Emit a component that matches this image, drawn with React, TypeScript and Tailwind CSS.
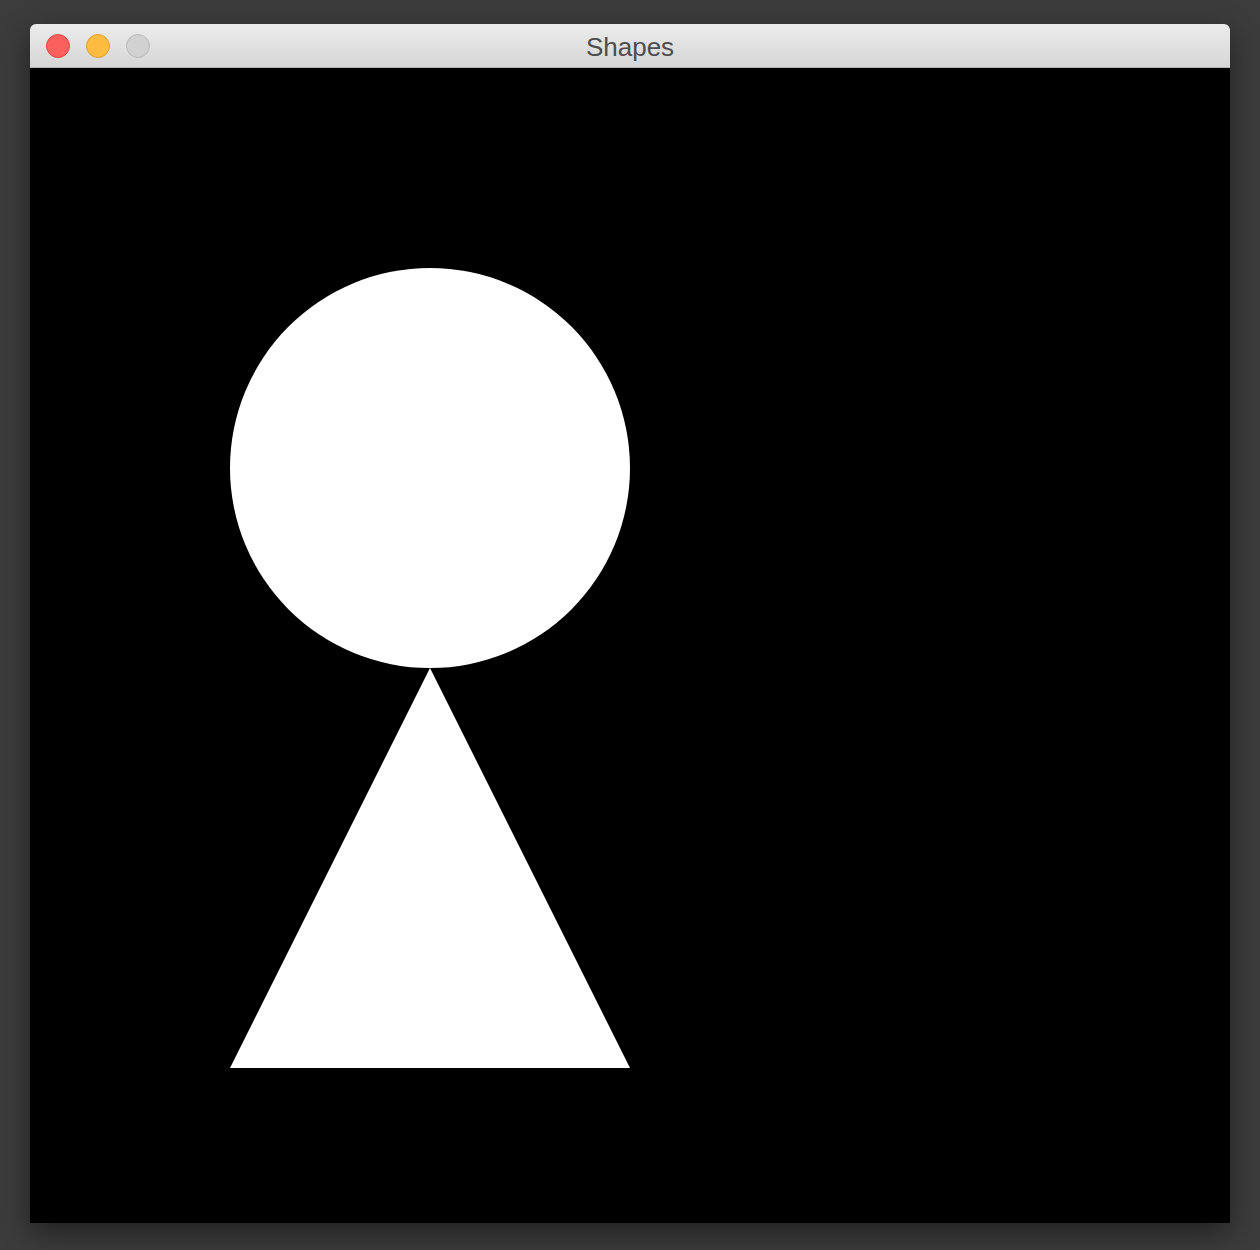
import React from 'react';

const Light: React.FC<{ fill: string; ring: string }> = ({ fill, ring }) => (
  <span className={`block w-[24px] h-[24px] rounded-full border ${fill} ${ring}`} />
);

const App: React.FC = () => {
  return (
    <div className="w-[1260px] h-[1250px] bg-[#3c3c3c] pt-[24px] pl-[30px] overflow-hidden">
      <div className="w-[1200px] flex flex-col rounded-t-[6px] overflow-hidden shadow-[0_10px_30px_rgba(0,0,0,0.45)]">
        {/* title bar */}
        <div className="h-[44px] grid grid-cols-[1fr_auto_1fr] items-center px-[16px] bg-gradient-to-b from-[#ececec] to-[#d6d6d6] border-b border-[#b4b4b4]">
          <div className="flex items-center gap-[16px]">
            <Light fill="bg-[#fc605c]" ring="border-[#de4a43]" />
            <Light fill="bg-[#fdbc40]" ring="border-[#dea035]" />
            <Light fill="bg-[#d1d1d1]" ring="border-[#bbbbbb]" />
          </div>
          <span className="pt-[2px] text-[26px] leading-none text-[#4d4d4d] font-['Liberation_Sans',Arial,sans-serif]">
            Shapes
          </span>
          <div />
        </div>

        {/* canvas */}
        <div className="h-[1155px] bg-black">
          <svg width="1200" height="1155" viewBox="0 0 1200 1155" className="block">
            <circle cx="400" cy="400" r="200" fill="#fff" />
            <polygon points="400,600 200,1000 600,1000" fill="#fff" />
          </svg>
        </div>
      </div>
    </div>
  );
};

export default App;
